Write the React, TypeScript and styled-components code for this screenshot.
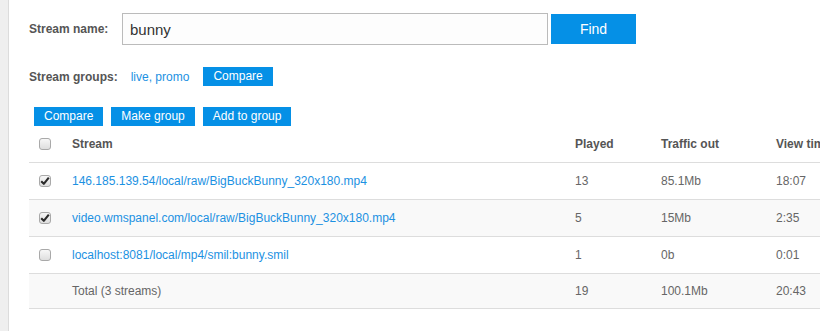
import React from 'react'
import styled, {createGlobalStyle} from 'styled-components'

const BLUE = '#0590e6'
const LINK = '#1c91e2'

const GlobalStyle = createGlobalStyle`
  html, body {
    margin: 0;
    padding: 0;
    background: #fff;
    overflow: hidden;
  }
  body {
    font-family: "Liberation Sans", Arial, sans-serif;
    color: #555;
  }
`

type Row = {
  stream: string
  played: string
  traffic: string
  time: string
  checked: boolean
}

const rows: Row[] = [
  {stream: '146.185.139.54/local/raw/BigBuckBunny_320x180.mp4', played: '13', traffic: '85.1Mb', time: '18:07', checked: true},
  {stream: 'video.wmspanel.com/local/raw/BigBuckBunny_320x180.mp4', played: '5', traffic: '15Mb', time: '2:35', checked: true},
  {stream: 'localhost:8081/local/mp4/smil:bunny.smil', played: '1', traffic: '0b', time: '0:01', checked: false},
]

const CheckBox = ({checked}: {checked?: boolean}) => (
  <StyledCheck>
    {checked && (
      <svg width="10" height="10" viewBox="0 0 10 10">
        <path d="M1.2 5.2 L3.8 7.8 L8.8 1.6" fill="none" stroke="#2b2b2b" strokeWidth="2.1" strokeLinejoin="round" />
      </svg>
    )}
  </StyledCheck>
)

const App = () => {
  return (
    <StyledPage>
      <GlobalStyle />
      <StyledSide />
      <StyledMain>
        <StyledNameRow>
          <StyledNameLabel>Stream name:</StyledNameLabel>
          <StyledInput defaultValue="bunny" />
          <StyledFind>Find</StyledFind>
        </StyledNameRow>

        <StyledGroupsRow>
          <StyledLabel>Stream groups:</StyledLabel>
          <StyledGroupLink>live, promo</StyledGroupLink>
          <StyledButton>Compare</StyledButton>
        </StyledGroupsRow>

        <StyledActions>
          <StyledButton>Compare</StyledButton>
          <StyledButton>Make group</StyledButton>
          <StyledButton>Add to group</StyledButton>
        </StyledActions>

        <StyledTable>
          <colgroup>
            <col style={{width: 33}} />
            <col style={{width: 503}} />
            <col style={{width: 86}} />
            <col style={{width: 115}} />
            <col style={{width: 114}} />
          </colgroup>
          <thead>
            <tr>
              <StyledTh><CheckBox /></StyledTh>
              <StyledTh>Stream</StyledTh>
              <StyledTh>Played</StyledTh>
              <StyledTh>Traffic out</StyledTh>
              <StyledTh>View time</StyledTh>
            </tr>
          </thead>
          <tbody>
            {rows.map((r, i) => (
              <StyledTr key={r.stream} $striped={i % 2 === 1}>
                <StyledTd><CheckBox checked={r.checked} /></StyledTd>
                <StyledTd><StyledLink>{r.stream}</StyledLink></StyledTd>
                <StyledTd>{r.played}</StyledTd>
                <StyledTd>{r.traffic}</StyledTd>
                <StyledTd>{r.time}</StyledTd>
              </StyledTr>
            ))}
            <StyledTr $striped $total>
              <StyledTd />
              <StyledTd>Total (3 streams)</StyledTd>
              <StyledTd>19</StyledTd>
              <StyledTd>100.1Mb</StyledTd>
              <StyledTd>20:43</StyledTd>
            </StyledTr>
          </tbody>
        </StyledTable>
      </StyledMain>
    </StyledPage>
  )
}

const StyledPage = styled.div`
  display: flex;
  width: 820px;
  height: 331px;
  overflow: hidden;
`

const StyledSide = styled.div`
  flex: 0 0 8px;
  background: #efefef;
  border-right: 1px solid #dcdcdc;
`

const StyledMain = styled.div`
  flex: 1;
  padding: 13px 0 0 20px;
  min-width: 0;
`

const StyledNameRow = styled.div`
  display: flex;
  align-items: center;
`

const StyledLabel = styled.span`
  font-size: 12px;
  font-weight: bold;
  color: #555;
`

const StyledNameLabel = styled(StyledLabel)`
  width: 93px;
`

const StyledInput = styled.input`
  box-sizing: border-box;
  width: 426px;
  height: 32px;
  border: 1px solid #bbb;
  border-radius: 0;
  padding: 0 7px;
  font-family: "Liberation Sans", Arial, sans-serif;
  font-size: 15px;
  color: #333;
  background: #fdfdfd;
  outline: none;
`

const StyledFind = styled.button`
  box-sizing: border-box;
  margin-left: 3px;
  width: 85px;
  height: 30px;
  border: none;
  background: ${BLUE};
  color: #fff;
  font-family: "Liberation Sans", Arial, sans-serif;
  font-size: 14px;
  padding: 0;
`

const StyledGroupsRow = styled.div`
  display: flex;
  align-items: center;
  margin-top: 22px;
  height: 19px;
`

const StyledLink = styled.span`
  color: ${LINK};
  font-size: 12px;
`

const StyledGroupLink = styled(StyledLink)`
  margin: 0 14px 0 13px;
`

const StyledButton = styled.button`
  box-sizing: border-box;
  height: 19px;
  padding: 0 10px;
  border: none;
  background: ${BLUE};
  color: #fff;
  font-family: "Liberation Sans", Arial, sans-serif;
  font-size: 12px;
  line-height: 19px;
`

const StyledActions = styled.div`
  display: flex;
  gap: 8px;
  margin: 21px 0 0 5px;
`

const StyledTable = styled.table`
  table-layout: fixed;
  width: 851px;
  border-collapse: collapse;
  font-size: 12px;
`

const StyledTh = styled.th`
  height: 36px;
  padding: 0 0 0 10px;
  text-align: left;
  font-weight: bold;
  color: #555;
  border-bottom: 1px solid #ddd;
  white-space: nowrap;
  overflow: hidden;
`

const StyledTr = styled.tr<{$striped?: boolean; $total?: boolean}>`
  background: ${p => (p.$striped ? '#f9f9f9' : '#fff')};
  td {
    height: ${p => (p.$total ? '34px' : '36px')};
  }
`

const StyledTd = styled.td`
  padding: 0 0 0 10px;
  color: #666;
  border-bottom: 1px solid #ddd;
  white-space: nowrap;
  overflow: hidden;
`

const StyledCheck = styled.span`
  box-sizing: border-box;
  display: flex;
  align-items: center;
  justify-content: center;
  width: 12px;
  height: 12px;
  border: 1px solid #a9a9a9;
  border-radius: 3px;
  background: linear-gradient(#f7f7f7, #dedede);
`

export default App
